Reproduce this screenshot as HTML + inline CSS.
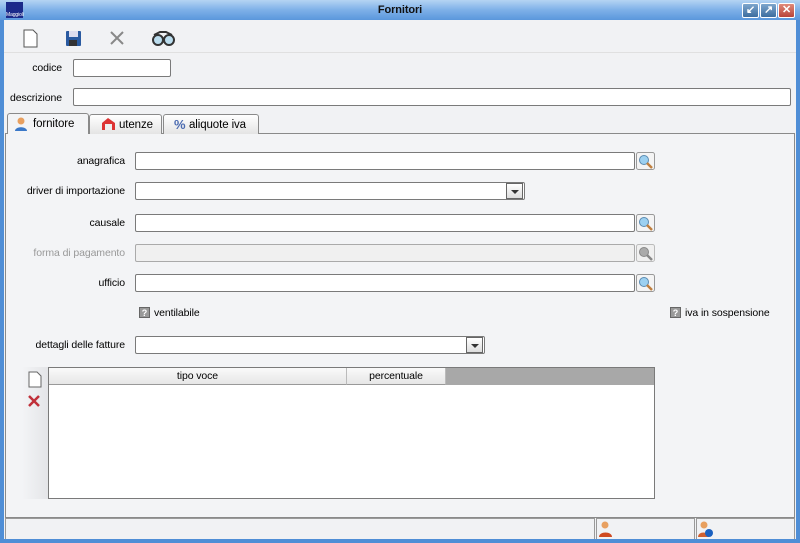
<!DOCTYPE html>
<html><head><meta charset="utf-8"><style>
*{box-sizing:border-box;margin:0;padding:0}
body{width:800px;height:543px;overflow:hidden;font-family:"Liberation Sans",sans-serif;font-size:10.5px;letter-spacing:-0.1px;color:#000;background:#4f8ed6;position:relative}
.a{position:absolute}
.win{left:4px;top:20px;width:792px;height:519px;background:#f1f2f4}
.title{left:0;top:0;width:800px;height:20px;background:linear-gradient(#b5d4f3,#7eb0e8 50%,#5a97dc);}
.title span{position:absolute;left:0;width:800px;text-align:center;top:4px;font-weight:bold;font-size:11px;color:#111}
.tb{width:17px;height:15px;top:3px;border:1px solid #fff;border-radius:2px;background:linear-gradient(#7ea6cc,#3d6d9f);color:#fff;font-size:11px;font-weight:bold;text-align:center;line-height:13px}
.inp{background:#fff;border:1px solid #7a7a7a;border-radius:2px;height:18px}
.lbl{text-align:right;width:120px}
.tab{top:114px;height:20px;border:1px solid #8a8a8a;border-bottom:none;border-radius:3px 3px 0 0;background:linear-gradient(#fff,#e4e4e4);font-size:11.5px;padding:4px 0 0 25px}
.dd{width:17px;height:16px;border:1px solid #666;background:linear-gradient(#fff,#ddd);top:0px;right:1px}
.dd:after{content:"";position:absolute;left:4px;top:6px;border-left:4px solid transparent;border-right:4px solid transparent;border-top:4px solid #333}
.q{width:11px;height:11px;background:#999;color:#fff;font-size:9px;font-weight:bold;text-align:center;line-height:11px;border:1px solid #666}
</style></head><body>
<div class="a title"><span>Fornitori</span>
<div class="a" style="left:6px;top:2px;width:17px;height:16px;background:#1b2a8a;color:#fff;font-size:5px;padding-top:10px">Maggioli</div>
<div class="a tb" style="left:742px">↙</div><div class="a tb" style="left:760px">↗</div><div class="a tb" style="left:778px;background:linear-gradient(#e08a7a,#b8443a)">✕</div>
</div>
<div class="a win"></div>
<svg class="a" style="left:20px;top:28px" width="170" height="20">
<path d="M4 2h9l4 4v13H4z" fill="#fff" stroke="#555"/>
<rect x="46" y="3" width="15" height="15" rx="1" fill="#2a5aa0"/><rect x="49" y="3" width="9" height="6" fill="#dde"/><rect x="49" y="12" width="8" height="6" fill="#333"/>
<path d="M91 4l12 12M103 4l-12 12" stroke="#888" stroke-width="2"/>
<circle cx="138" cy="12" r="5" fill="#bde" stroke="#333" stroke-width="2"/><circle cx="149" cy="12" r="5" fill="#bde" stroke="#333" stroke-width="2"/><path d="M134 7l6-3h6l6 3" stroke="#333" stroke-width="2" fill="none"/>
</svg>
<div class="a" style="left:4px;top:52px;width:792px;height:1px;background:#e0e0e0"></div>
<div class="a lbl" style="left:-58px;top:62px">codice</div>
<div class="a inp" style="left:73px;top:59px;width:98px"></div>
<div class="a lbl" style="left:-58px;top:92px">descrizione</div>
<div class="a inp" style="left:73px;top:88px;width:718px"></div>
<div class="a" style="left:5px;top:133px;width:790px;height:385px;border:1px solid #8a8a8a;background:#f3f4f6"></div>
<div class="a tab" style="left:163px;width:96px">aliquote iva</div>
<div class="a tab" style="left:89px;width:73px;padding-left:29px">utenze</div>
<div class="a tab" style="left:7px;width:82px;height:21px;background:#f3f4f6;top:113px">fornitore</div>
<svg class="a" style="left:14px;top:116px" width="240" height="16">
<circle cx="7" cy="5" r="3.5" fill="#e8a060"/><path d="M1 15c0-5 12-5 12 0z" fill="#3a78c8"/>
<path d="M88 7l6-5 7 5v7h-13z" fill="#d33"/><rect x="91" y="8" width="7" height="6" fill="#eee"/>
<text x="160" y="13" font-size="13" font-weight="bold" fill="#4a6ab0" font-family="Liberation Sans">%</text>
</svg>
<div class="a lbl" style="left:5px;top:155px">anagrafica</div>
<div class="a inp" style="left:135px;top:152px;width:500px"></div>
<div class="a lbl" style="left:5px;top:185px">driver di importazione</div>
<div class="a inp" style="left:135px;top:182px;width:390px"><div class="a dd"></div></div>
<div class="a lbl" style="left:5px;top:217px">causale</div>
<div class="a inp" style="left:135px;top:214px;width:500px"></div>
<div class="a lbl" style="left:5px;top:247px;color:#999">forma di pagamento</div>
<div class="a inp" style="left:135px;top:244px;width:500px;background:#f0f0f0;border-color:#aaa"></div>
<div class="a lbl" style="left:5px;top:277px">ufficio</div>
<div class="a inp" style="left:135px;top:274px;width:500px"></div>
<svg class="a" style="left:636px;top:152px" width="20" height="140">
<g id="m"><rect x="0.5" y="0.5" width="18" height="17" rx="2" fill="#f4f4f4" stroke="#999"/><circle cx="8" cy="8" r="4.5" fill="#9cd0f0" stroke="#5a8ab0"/><path d="M11 11l5 5" stroke="#c08040" stroke-width="2.5"/></g>
<use href="#m" y="62"/><g transform="translate(0,92)"><rect x="0.5" y="0.5" width="18" height="17" rx="2" fill="#f0f0f0" stroke="#bbb"/><circle cx="8" cy="8" r="4.5" fill="#aaa" stroke="#888"/><path d="M11 11l5 5" stroke="#888" stroke-width="2.5"/></g>
<use href="#m" y="122"/>
</svg>
<div class="a q" style="left:139px;top:307px">?</div><div class="a" style="left:154px;top:307px">ventilabile</div>
<div class="a q" style="left:670px;top:307px">?</div><div class="a" style="left:685px;top:307px">iva in sospensione</div>
<div class="a lbl" style="left:5px;top:339px">dettagli delle fatture</div>
<div class="a inp" style="left:135px;top:336px;width:350px"><div class="a dd"></div></div>
<div class="a" style="left:22px;top:367px;width:26px;height:132px;background:linear-gradient(90deg,#f3f4f6,#e4e5e8)"></div>
<svg class="a" style="left:26px;top:370px" width="20" height="44">
<path d="M3 2h8l4 4v11H3z" fill="#fff" stroke="#666"/>
<path d="M3 26l10 10M13 26l-10 10" stroke="#c0303a" stroke-width="2.5"/>
</svg>
<div class="a" style="left:48px;top:367px;width:607px;height:132px;border:1px solid #7a7a7a;background:#fff"></div>
<div class="a" style="left:49px;top:368px;width:298px;height:17px;background:linear-gradient(#fafafa,#e6e6e6);border-right:1px solid #bbb;border-bottom:1px solid #999;text-align:center;padding-top:2px">tipo voce</div>
<div class="a" style="left:347px;top:368px;width:99px;height:17px;background:linear-gradient(#fafafa,#e6e6e6);border-right:1px solid #bbb;border-bottom:1px solid #999;text-align:center;padding-top:2px">percentuale</div>
<div class="a" style="left:446px;top:368px;width:208px;height:17px;background:#a8a8a8"></div>
<div class="a" style="left:5px;top:518px;width:590px;height:21px;border:1px solid #999;border-bottom:none;background:#f1f2f4"></div>
<div class="a" style="left:596px;top:518px;width:99px;height:21px;border:1px solid #999;border-bottom:none;background:#f1f2f4"></div>
<div class="a" style="left:696px;top:518px;width:99px;height:21px;border:1px solid #999;border-bottom:none;background:#f1f2f4"></div>
<svg class="a" style="left:598px;top:520px" width="120" height="18">
<circle cx="7" cy="5" r="3.5" fill="#e8a060"/><path d="M1 17c0-6 13-6 13 0z" fill="#d04a20"/>
<circle cx="106" cy="5" r="3.5" fill="#e8a060"/><path d="M100 17c0-6 11-6 11 0z" fill="#d06030"/><circle cx="111" cy="13" r="4" fill="#1a60c0"/>
</svg>
</body></html>
